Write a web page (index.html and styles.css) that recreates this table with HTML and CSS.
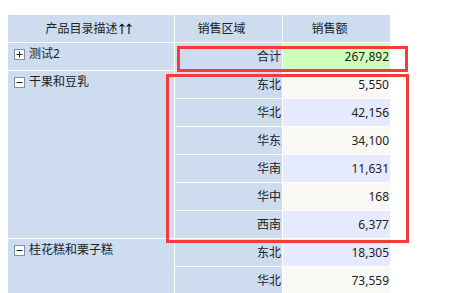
FILE: index.html
```html
<!DOCTYPE html>
<html lang="zh">
<head>
<meta charset="utf-8">
<link rel="stylesheet" href="styles.css">
</head>
<body>
<div class="wrap">
  <div class="grid">
    <div class="cell head h1">产品目录描述<svg class="sort" width="14" height="11" viewBox="0 0 14 11"><path d="M3 1.2V11M0.6 3.6L3 1.2L5.4 3.6M10 1.2V11M7.6 3.6L10 1.2L12.4 3.6" fill="none" stroke="#111" stroke-width="1.1"/></svg></div>
    <div class="cell head h2">销售区域</div>
    <div class="cell head h2">销售额</div>

    <div class="cell dim"><svg class="tog" width="11" height="11" viewBox="0 0 11 11"><rect x="0.5" y="0.5" width="10" height="10" fill="#fff" stroke="#7890ad"/><path d="M2.5 5.5H8.5M5.5 2.5V8.5" stroke="#222" stroke-width="1"/></svg><span>测试2</span></div>
    <div class="cell reg">合计</div>
    <div class="cell val total">267,892</div>

    <div class="cell dim span6"><svg class="tog" width="11" height="11" viewBox="0 0 11 11"><rect x="0.5" y="0.5" width="10" height="10" fill="#fff" stroke="#7890ad"/><path d="M2.5 5.5H8.5" stroke="#222" stroke-width="1"/></svg><span>干果和豆乳</span></div>
    <div class="cell reg">东北</div><div class="cell val a">5,550</div>
    <div class="cell reg">华北</div><div class="cell val b">42,156</div>
    <div class="cell reg">华东</div><div class="cell val a">34,100</div>
    <div class="cell reg">华南</div><div class="cell val b">11,631</div>
    <div class="cell reg">华中</div><div class="cell val a">168</div>
    <div class="cell reg">西南</div><div class="cell val b">6,377</div>

    <div class="cell dim span6"><svg class="tog" width="11" height="11" viewBox="0 0 11 11"><rect x="0.5" y="0.5" width="10" height="10" fill="#fff" stroke="#7890ad"/><path d="M2.5 5.5H8.5" stroke="#222" stroke-width="1"/></svg><span>桂花糕和栗子糕</span></div>
    <div class="cell reg">东北</div><div class="cell val b">18,305</div>
    <div class="cell reg">华北</div><div class="cell val a">73,559</div>
  </div>
  <div class="mark mark1"></div>
  <div class="mark mark2"></div>
</div>
</body>
</html>
```

FILE: styles.css
```css
html, body {
  margin: 0;
  padding: 0;
  background: #fff;
}
body {
  font-family: "Noto Sans", "Noto Sans CJK SC", sans-serif;
  font-size: 12px;
  color: #222;
  overflow: hidden;
}
.wrap {
  position: relative;
  padding: 15px 0 0 8px;
}
.grid {
  display: grid;
  grid-template-columns: 167px 108px 108px;
  grid-auto-rows: 28px;
  width: 383px;
}
.cell {
  box-sizing: border-box;
  border-right: 1px solid #fff;
  border-bottom: 1px solid #fff;
  background: #cddcef;
  white-space: nowrap;
}
.head {
  display: flex;
  align-items: center;
  justify-content: center;
  line-height: 27px;
}
.h1 { padding-right: 4px; }
.h2 { padding-right: 14px; }
.sort { margin-left: 1px; margin-top: -1px; }
.dim {
  display: flex;
  align-items: flex-start;
  padding: 1px 0 0 6px;
  line-height: 19px;
}
.dim .tog { margin-top: 5px; margin-right: 4px; flex: none; }
.span6 { grid-row: span 6; }
.reg, .val {
  text-align: right;
  padding: 1px 1px 0 0;
  line-height: 26px;
}
.val { padding-right: 1px; }
.a { background: #f9f8f4; }
.b { background: #e5eaff; }
.total { background: #ccffbb; }
.mark {
  position: absolute;
  box-sizing: border-box;
  border: 3px solid #f53a3a;
}
.mark1 { left: 177px; top: 46px; width: 231px; height: 26px; }
.mark2 { left: 166px; top: 74px; width: 243px; height: 169px; }
```
